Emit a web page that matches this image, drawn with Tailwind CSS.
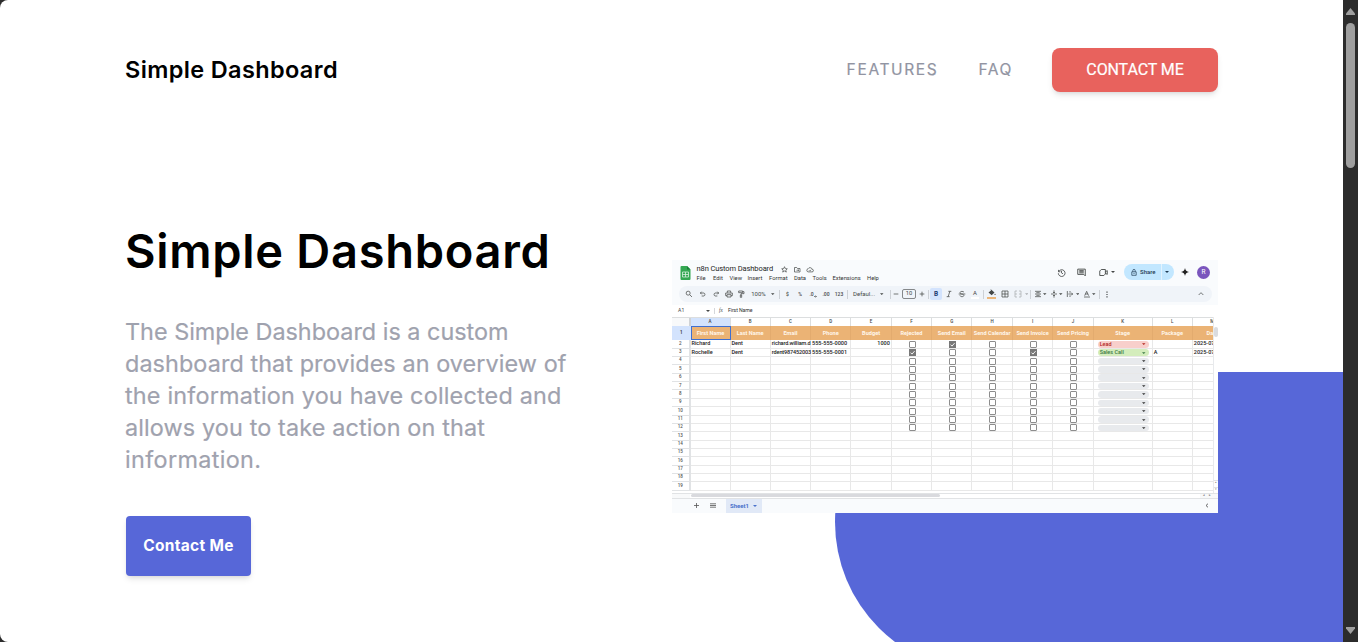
<!DOCTYPE html>
<html lang="en">
<head>
<meta charset="utf-8">
<title>Simple Dashboard</title>
<script src="https://cdn.jsdelivr.net/npm/@tailwindcss/browser@4"></script>
</head>
<body class="bg-[#2c2c2c] overflow-hidden font-[Roboto,sans-serif]">
<div class="flex h-[642px] w-[1358px] overflow-hidden">
  <main class="relative h-full w-[1343px] overflow-hidden rounded-l-lg bg-white">
    <div class="absolute left-[835px] top-[372px] h-[300px] w-[508px] rounded-l-full bg-[#5767d8]"></div>
    <div class="relative flex flex-col pl-[126px] pr-[125px]">
      <header class="mt-12 flex h-11 items-center">
        <div class="-ml-px whitespace-nowrap font-[Inter,sans-serif] text-[23.500px] font-semibold tracking-[0.360px] text-black">Simple Dashboard</div>
        <nav class="ml-auto flex items-center text-base text-[#9194a2]">
          <a class="mr-[40px] whitespace-nowrap font-[Inter,sans-serif] text-[15.500px] tracking-[1.650px] [-webkit-text-stroke:0.200px_#9194a2]">FEATURES</a>
          <a class="mr-[39px] whitespace-nowrap font-[Inter,sans-serif] text-[15.500px] tracking-[1.600px] [-webkit-text-stroke:0.200px_#9194a2]">FAQ</a>
          <a class="flex h-11 w-[166px] items-center justify-center rounded-lg bg-[#e8625d] text-white shadow-md"><span class="whitespace-nowrap tracking-[-0.100px] [-webkit-text-stroke:0.2px_white]">CONTACT ME</span></a>
        </nav>
      </header>
      <div class="flex justify-between">
        <section class="mt-[135px] flex w-[460px] flex-col items-start font-[Inter,sans-serif]">
          <h1 class="-ml-[1px] whitespace-nowrap text-[47px] font-semibold leading-[48px] tracking-[0.700px] text-black">Simple Dashboard</h1>
          <p class="-ml-px mt-[41px] whitespace-nowrap text-[23.400px] leading-8 text-[#9fa2ae] [-webkit-text-stroke:0.200px_#9fa2ae]">The Simple Dashboard is a custom<br><span class="tracking-[0.080px]">dashboard that provides an overview of</span><br><span class="tracking-[0.190px]">the information you have collected and</span><br><span class="tracking-[0.130px]">allows you to take action on that</span><br><span class="tracking-[0.350px]">information.</span></p>
          <a class="mt-10 flex h-[60px] w-[125px] items-center justify-center rounded bg-[#5767d8] text-[15.500px] font-bold text-white shadow-md"><span class="whitespace-nowrap tracking-[0.300px]">Contact Me</span></a>
        </section>
        <section class="mt-[168px] flex h-[253px] w-[546px] flex-col overflow-hidden bg-white text-[5.500px] leading-none text-[#444746]">
          <div class="h-[45px] shrink-0 bg-[#f9fbfd]">
            <div class="flex h-[26px] pl-2">
              <svg class="mt-[5px] h-[16px] w-[11px]" viewBox="0 0 11 16"><path fill="#34a853" d="M1.500 1h5.500L10.500 4.500V14a1 1 0 0 1-1 1h-8a1 1 0 0 1-1-1V2a1 1 0 0 1 1-1z"/><path fill="#188038" d="M7 1l3.500 3.500H7z"/><path fill="none" stroke="#d8f0df" stroke-width=".8" d="M2.500 7h6v5h-6zM2.500 9.500h6M5.500 7v5"/></svg>
              <div class="ml-[5.500px] mt-[4px] w-[340px]">
                <div class="flex h-[10px] items-center text-[#1f1f1f]"><span class="w-[84px] whitespace-nowrap text-[7.500px] tracking-[-0.100px]">n8n Custom Dashboard</span>
                  <svg class="h-[7px] w-[33px]" viewBox="0 0 33 7" fill="none" stroke="#444746" stroke-width=".7"><path d="M3.500.7l.8 1.900 2 .2-1.500 1.300.5 2-1.800-1.100-1.800 1.100.5-2L.7 2.800l2-.2zM13.500 1.500v4.500h5.500v-3.500h-2.500l-.8-1zM15.500 4.200h2M17 3.500l.8.700-.8.800M27 5.900a1.600 1.600 0 0 1 0-3.100 2.300 2.300 0 0 1 4.200.5 1.300 1.300 0 0 1-.2 2.600zM28 4.300l.8.800 1.300-1.400"/></svg>
                </div>
                <div class="flex h-[9px] items-center whitespace-nowrap text-[5.800px] text-[#333]"><span class="w-[16.500px]">File</span><span class="w-[16.500px]">Edit</span><span class="w-[18px]">View</span><span class="w-[21.500px]">Insert</span><span class="w-[25px]">Format</span><span class="w-[18.500px]">Data</span><span class="w-[20px]">Tools</span><span class="w-[34.500px]">Extensions</span><span>Help</span></div>
              </div>
              <div class="ml-auto flex items-center pb-[2px] pr-2">
                <svg class="h-[9px] w-[9px]" viewBox="0 0 24 24" fill="none" stroke="#444746" stroke-width="2.200"><path d="M4 5v5h5M4.500 9.500A9 9 0 1 1 3.500 14M12 7.500V13l4 2.500"/></svg>
                <svg class="ml-[11px] h-[9px] w-[9px]" viewBox="0 0 24 24" fill="none" stroke="#444746" stroke-width="2.400"><path d="M2 3h20v18l-4-4H2zM6 7h12M6 10h12M6 13h12"/></svg>
                <svg class="ml-[13px] h-[9px] w-[9px]" viewBox="0 0 24 24" fill="none" stroke="#444746" stroke-width="2.400"><path d="M6 4h11v12l-4 4H2V8zM17 10l5-3v10l-5-3"/></svg>
                <svg class="ml-[3px] h-[2px] w-[4px]" viewBox="0 0 4 2"><path fill="#444746" d="M0 0h4L2 2z"/></svg>
                <div class="ml-[9px] flex h-4 w-[49.500px] items-center rounded-full bg-[#c2e7ff] text-[6px] font-medium text-[#1f3a52]">
                  <svg class="ml-[7px] h-[7px] w-[6px]" viewBox="0 0 6 7" fill="none" stroke="#1f3a52" stroke-width=".7"><path d="M.8 2.800h4.400v3.500H.8zM1.800 2.800V1.600a1.200 1.200 0 0 1 2.400 0v1.200M3 4v1"/></svg>
                  <span class="ml-[3px] w-[21px]">Share</span><i class="h-full w-px bg-[#e3f3fe]"></i>
                  <svg class="ml-[3px] h-[2px] w-[4px]" viewBox="0 0 4 2"><path fill="#1f3a52" d="M0 0h4L2 2z"/></svg>
                </div>
                <svg class="ml-[7px] h-[8px] w-[8px]" viewBox="0 0 8 8"><path fill="#222" d="M4 0Q4.500 3.500 8 4 4.500 4.500 4 8 3.500 4.500 0 4 3.500 3.500 4 0z"/></svg>
                <span class="ml-[8.500px] flex h-[13px] w-[13px] items-center justify-center rounded-full bg-[#7a55bd] text-[6.500px] text-white">R</span>
              </div>
            </div>
            <div id="tools" class="ml-[7px] flex h-4 w-[533px] items-center rounded-full bg-[#f0f4f9]"></div>
          </div>
          <div class="flex h-[11.500px] shrink-0 items-center text-[5.200px]"><span class="ml-[6px] w-[28px]">A1</span><svg class="h-[2px] w-[4px]" viewBox="0 0 4 2"><path fill="#444746" d="M0 0h4L2 2z"/></svg><i class="ml-[4px] h-[6px] w-px bg-[#d5d7da]"></i><em class="ml-[4px] w-[9px] font-[Liberation_Serif]">fx</em><span class="text-[#333] tracking-[-0.100px]">First Name</span></div>
          <div class="flex h-[176.500px] shrink-0">
            <div id="grid" class="w-[541px] overflow-hidden"></div>
            <div class="flex w-[5px] flex-col border-l border-[#e8eaed]"><i class="mt-[10px] h-[10px] w-[4px] rounded-full bg-[#dadce0]"></i><span class="mt-auto h-[7px] border-t border-[#e1e3e5] text-center text-[3px] text-[#888]">▴</span><span class="h-[6px] border-t border-[#e1e3e5] text-center text-[3px] text-[#888]">▾</span></div>
          </div>
          <div class="flex h-[5.500px] shrink-0 items-center border-y-[0.500px] border-[#e1e3e5]"><i class="h-full w-[18px] bg-[#f8f9fa]"></i><i class="ml-[1px] h-[3px] w-[249px] rounded-full bg-[#d9dade]"></i><span class="ml-auto flex h-full w-[18px] items-center gap-[4px] bg-[#f8f9fa] pl-[3px] text-[3px] text-[#777]"><b>◂</b><b>▸</b></span></div>
          <div class="flex grow items-center bg-[#f9fbfd]">
            <svg class="ml-[22px] h-[5px] w-[5px]" viewBox="0 0 5 5"><path stroke="#555" stroke-width=".8" d="M0 2.500h5M2.500 0v5"/></svg>
            <svg class="ml-[11px] h-[5px] w-[6px]" viewBox="0 0 6 5"><path stroke="#555" stroke-width=".8" d="M0 .8h6M0 2.500h6M0 4.200h6"/></svg>
            <div class="ml-[9.500px] flex h-full w-[36.500px] items-center bg-[#e1e9f7] pl-[4.500px] text-[6px] font-bold text-[#4a72cc]"><span class="w-[23px]">Sheet1</span><svg class="h-[2px] w-[4px]" viewBox="0 0 4 2"><path fill="#4a72cc" d="M0 0h4L2 2z"/></svg></div>
            <svg class="ml-auto mr-[9px] h-[5px] w-[4px]" viewBox="0 0 4 5"><path fill="none" stroke="#444" stroke-width=".8" d="M3 .7L1 2.500l2 1.800"/></svg>
          </div>
        </section>
      </div>
    </div>
  </main>
  <aside class="flex w-[15px] flex-col items-center rounded-r-lg bg-[#2c2c2c]">
    <svg class="mt-2 h-[7px] w-[9px]" viewBox="0 0 9 7"><path fill="#9f9f9f" d="M4.500 0L9 5.500V7H0V5.500z"/></svg>
    <i class="mt-2 h-[145px] w-[9px] rounded-full bg-[#9f9f9f]"></i>
    <svg class="mb-2 mt-auto h-[7px] w-[9px]" viewBox="0 0 9 7"><path fill="#9f9f9f" d="M4.500 7L9 1.500V0H0V1.500z"/></svg>
  </aside>
</div>
<script>
// Toolbar: each entry is [centre x inside the bar, markup].
const icon = d => `<svg class="h-[8px] w-[8px] shrink-0" viewBox="0 0 24 24" fill="none" stroke="#444746" stroke-width="2.200"><path d="${d}"/></svg>`;
const sep = '<i class="h-[9px] w-px shrink-0 bg-[#cdd1d6]"></i>';
const caret = '<svg class="h-[2px] w-[3.500px] shrink-0" viewBox="0 0 4 2"><path fill="#444746" d="M0 0h4L2 2z"/></svg>';
const txt = t => `<span class="whitespace-nowrap text-[6px]">${t}</span>`;
const small = t => `<span class="whitespace-nowrap text-[5px] font-medium">${t}</span>`;
const items = [
  [10, icon('M9.500 3.500a6 6 0 1 0 0 12 6 6 0 0 0 0-12zM14 14l7 7')],
  [24, icon('M8 5L4 9l4 4M4 9h11a5 5 0 0 1 0 9H8')],
  [36.5, icon('M16 5l4 4-4 4M20 9H9a5 5 0 0 0 0 9h7')],
  [49.5, icon('M7 8V3h10v5M6 17H2V9h20v8h-4M6 14h12v7H6z')],
  [62, icon('M5 3h12v5H5zM17 5h4v6h-9v4M10 15h4v7h-4z')],
  [79.5, txt('100%')], [94, caret], [100.5, sep],
  [108.5, small('$')], [121, small('%')], [134, small('.0') + '<svg class="mt-[5px] h-[3px] w-[3px] shrink-0" viewBox="0 0 3 3"><path fill="none" stroke="#444746" stroke-width=".6" d="M3 1.500H.5M1.500.5l-1 1 1 1"/></svg>'], [147, small('.00') ], [160, small('123')], [168.5, sep],
  [185, txt('Defaul...')], [203, caret], [211, sep],
  [217, icon('M5 12h14')],
  [230, '<span class="flex h-[10px] w-[14px] shrink-0 items-center justify-center rounded-[2px] border border-[#85888a] text-[5.800px]">10</span>'],
  [243, icon('M5 12h14M12 5v14')], [249.5, sep],
  [257, '<b class="flex h-3 w-3 shrink-0 items-center justify-center rounded-[2px] bg-[#d3e3fd] text-[6.500px] text-[#1b3a70]">B</b>'],
  [270, icon('M10 4h9M5 20h9M14.500 4l-5 16')],
  [283, icon('M18 7c-1-4-12-4-12 1 0 3 3 4 6 4M2 12h20M12 12c8 2 7 8 0 8-4 0-6-2-6-4')],
  [296, '<span class="h-[9px] w-[8px] shrink-0 border-b-2 border-white text-center text-[6px]">A</span>'], [304.5, sep],
  [312.5, '<span class="flex h-[10px] w-[9px] shrink-0 justify-center border-b-2 border-[#ecb679]"><svg class="h-[7px] w-[8px]" viewBox="0 0 8 7"><path fill="#444746" d="M2.500 0l4 3.500-2.800 2.800L.5 3.500 3 1.500zM7 4.500l.8 1.500H6.300z"/></svg></span>'],
  [326, icon('M3 3h18v18H3zM12 3v18M3 12h18')],
  [339, '<span class="flex opacity-40">' + icon('M9 3H3v18h6M15 3h6v18h-6M3 12h6M15 12h6') + '</span>'], [347.5, '<span class="flex opacity-40">' + caret + '</span>'], [351.5, sep],
  [359, icon('M3 4h18M7 8h10M3 12h18M7 16h10M3 20h18')], [366, caret],
  [375, icon('M3 12h18M12 1v8M12 15v8M9 6l3 3 3-3M9 18l3-3 3 3')], [382, caret],
  [391, icon('M4 3v18M12 3v5M12 16v5M7 12h13M16 8l4 4-4 4')], [398.5, caret],
  [408, icon('M5 17l6-13 6 13M7 12h8M3 21h18')], [415, caret], [420.5, sep],
  [428, '<svg class="h-[7px] w-[2px] shrink-0" viewBox="0 0 2 7"><path fill="#444746" d="M.4.5h1.200v1.200H.4zM.4 2.900h1.200v1.200H.4zM.4 5.300h1.200v1.200H.4z"/></svg>'],
  [521.5, icon('M5 15l7-7 7 7')]
];
let x = 0;
document.getElementById('tools').innerHTML = items.map(([c, h]) => {
  const m = c - x; x = c;
  return `<span class="flex w-0 shrink-0 items-center justify-center" style="margin-left:${m}px">${h}</span>`;
}).join('');

// Spreadsheet grid
const widths = [18.5, 40, 40.3, 40.3, 40.3, 40.4, 40.3, 40.4, 40.4, 40.4, 40.4, 59, 40.2, 40];
const heads = ['First Name', 'Last Name', 'Email', 'Phone', 'Budget', 'Rejected', 'Send Email', 'Send Calendar', 'Send Invoice', 'Send Pricing', 'Stage', 'Package', 'Date'];
const rows = { 2: ['Richard', 'Dent', 'richard.william.d', '555-555-0000', '1000', 0, 1, 0, 0, 0, 'Lead', '', '2025-07'], 3: ['Rochelle', 'Dent', 'rdent987452003', '555-555-0001', '', 1, 0, 0, 1, 0, 'Sales Call', 'A', '2025-07'] };
const cell = (i, cls, h) => `<div class="flex shrink-0 items-center whitespace-nowrap ${cls}" style="width:${widths[i]}px">${h}</div>`;
const box = on => on
  ? '<svg class="h-[7px] w-[7px]" viewBox="0 0 7 7"><path fill="#777" d="M0 0h7v7H0z"/><path fill="none" stroke="#fff" stroke-width=".9" d="M1.500 3.600l1.500 1.500 2.600-3"/></svg>'
  : '<i class="h-[7px] w-[7px] rounded-[1px] border border-[#8d8d8d] bg-white"></i>';
const chip = t => {
  const c = t === 'Lead' ? 'bg-[#f8cfcb] text-[#b3261e]' : t ? 'bg-[#d4edbc] text-[#3c7a45]' : 'bg-[#e8eaed] text-[#333]';
  return `<span class="flex h-[6.500px] w-[51px] items-center justify-between rounded-full pl-[2px] pr-[3px] ${c}"><span>${t || ''}</span><svg class="h-[2px] w-[3.500px]" viewBox="0 0 4 2"><path fill="currentColor" d="M0 0h4L2 2z"/></svg></span>`;
};
let out = '<div class="flex h-[9.800px] border-t border-[#dcdedf] text-[4.500px] font-medium">' + cell(0, 'border-r-2 border-[#d0d3d6] bg-[#f8f9fa]', '') +
  [...'ABCDEFGHIJKLM'].map((l, i) => cell(i + 1, 'justify-center border-r border-[#dcdedf] ' + (i ? 'bg-white' : 'bg-[#d3e3fd]'), l)).join('') + '</div>';
out += '<div class="flex h-[14px] bg-[#ebb375] text-[5.600px] font-bold text-[#fff6ea]">' + cell(0, 'justify-center bg-[#d3e3fd] text-[4.500px] text-[#444]', '1') +
  heads.map((l, i) => cell(i + 1, 'justify-center ' + (i ? 'border-r border-[#e3ab6e]' : 'border border-[#3f6fd0]'), l)).join('') + '</div>';
for (let r = 2; r < 20; r++) {
  const d = rows[r] || [];
  out += '<div class="flex h-[8.370px] text-[5.500px] font-medium text-[#222]">' + cell(0, 'justify-center border-r-2 border-b border-[#e1e3e5] text-[4.500px] text-[#555]', r);
  for (let c = 0; c < 13; c++) {
    let h = d[c] || '', k = 'pl-[1px] ';
    if (c > 4 && c < 10) { h = r < 13 ? box(d[c]) : ''; k = 'justify-center pl-[1.500px] pt-[0.600px] '; }
    if (c === 10) { h = r < 13 ? chip(d[c]) : ''; k = 'justify-center pl-[1px] pt-[0.600px] '; }
    if (c === 2) k = 'pl-[1px] tracking-[-0.120px] ';
    if (c === 4) k = 'justify-end pr-[1px] ';
    out += cell(c + 1, k + 'border-r border-b border-[#e8e8e8]', h);
  }
  out += '</div>';
}
document.getElementById('grid').innerHTML = out;
</script>
</body>
</html>
